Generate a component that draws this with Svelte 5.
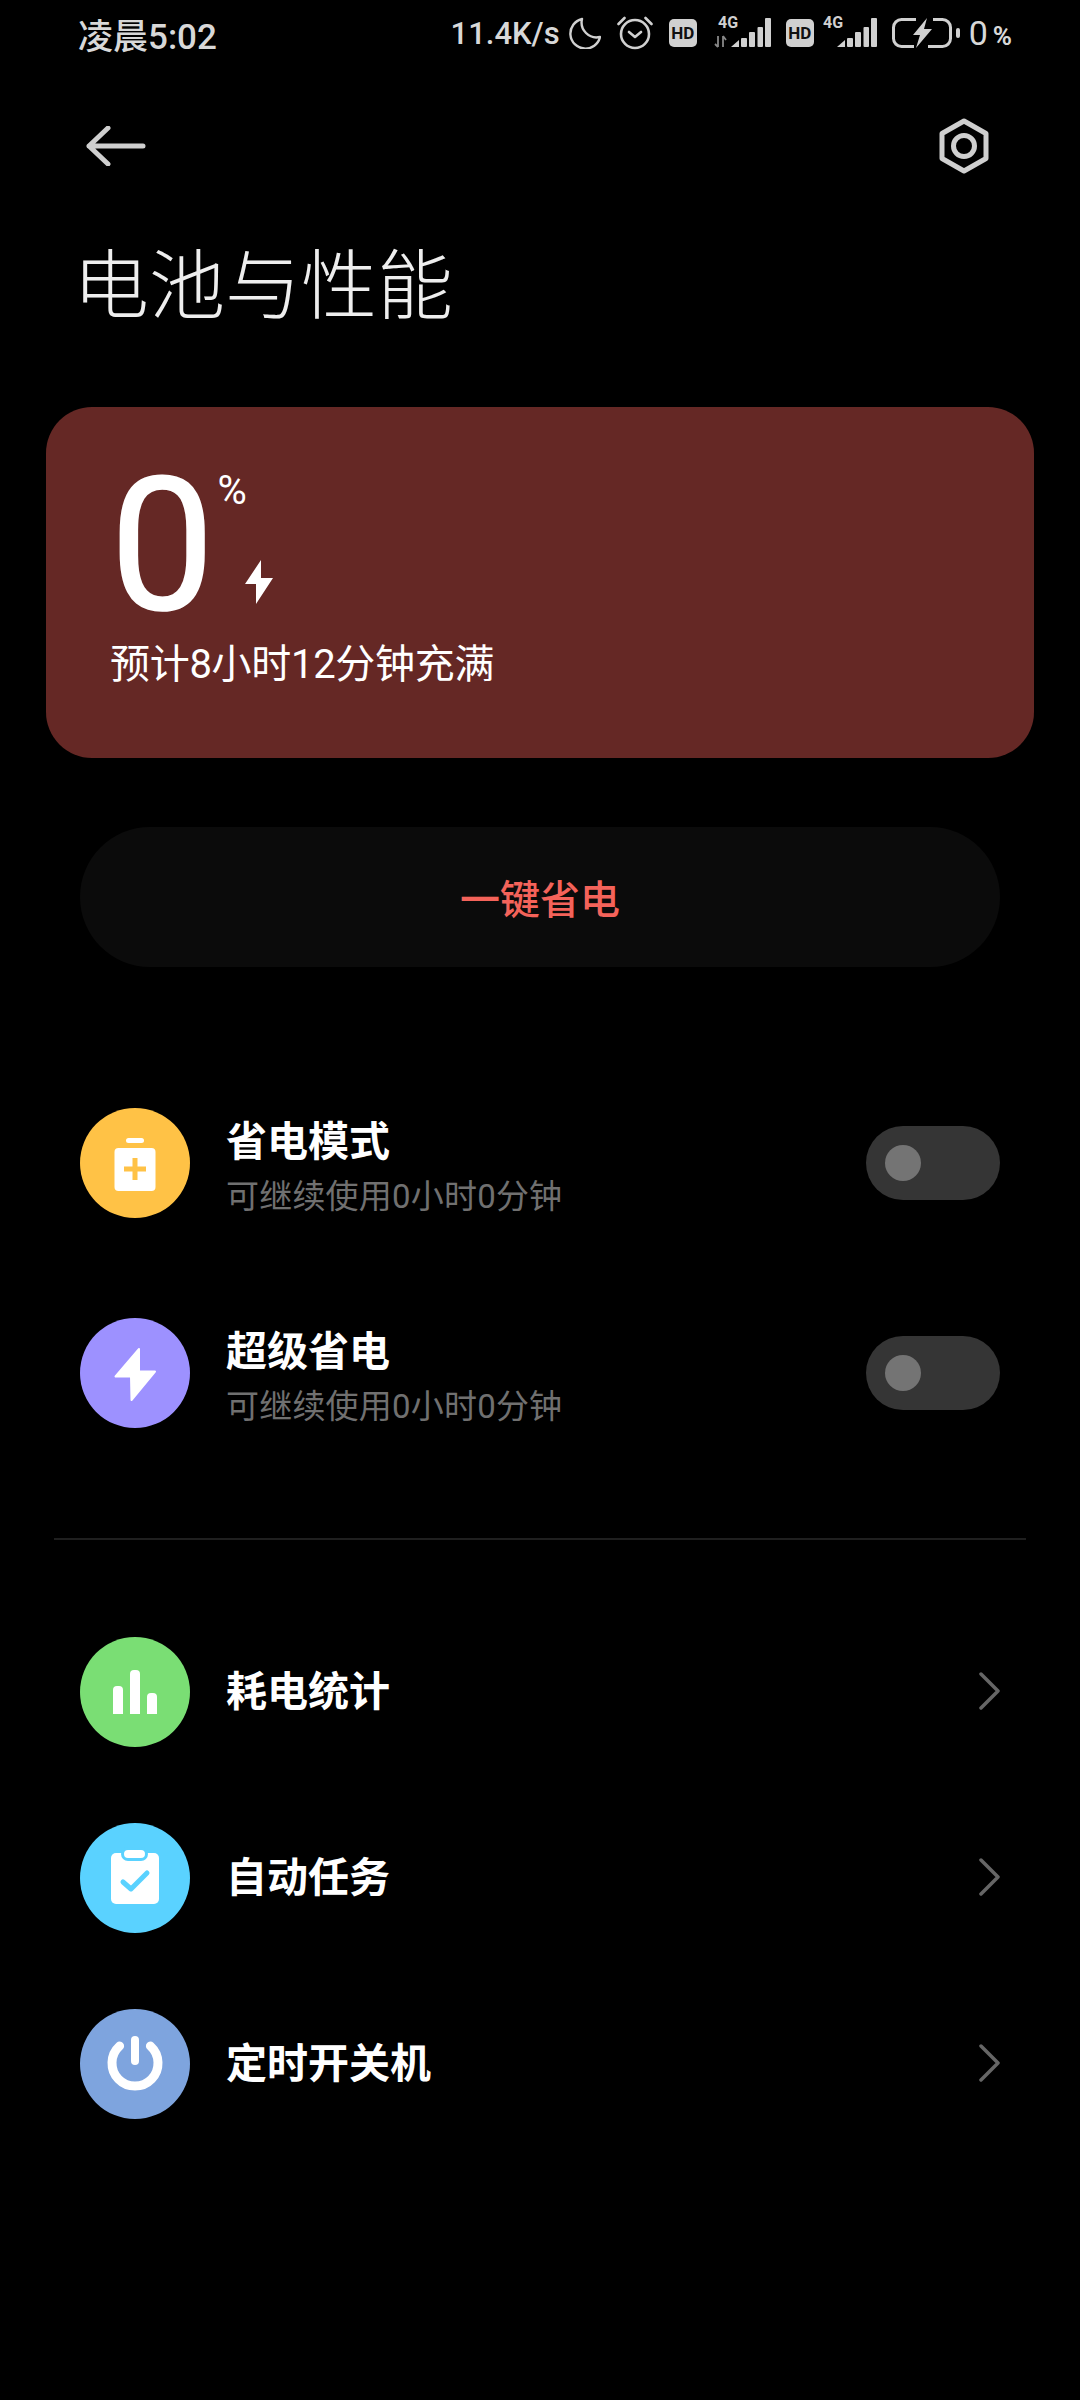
<script>
  const powerRows = [
    { title: '省电模式', sub: '可继续使用0小时0分钟', color: '#ffc246', icon: 'saver' },
    { title: '超级省电', sub: '可继续使用0小时0分钟', color: '#9d91ff', icon: 'bolt' }
  ];
  const linkRows = [
    { title: '耗电统计', color: '#7ade74', icon: 'stats' },
    { title: '自动任务', color: '#5ad2ff', icon: 'tasks' },
    { title: '定时开关机', color: '#7ea4de', icon: 'power' }
  ];
</script>

{#snippet signal(first)}
  <svg class="sig" class:first width={first ? 58 : 54} height="42" viewBox="0 -3 {first ? 58 : 54} 42">
    <text x={first ? 4 : 0} y="13">4G</text>
    {#if first}
      <path d="M4 21v11M1 29l3 3M9 32V21M9 21l3 4" class="arrows" />
    {/if}
    <g fill="#d0d0d0" transform={first ? '' : 'translate(-3 0)'}>
      <path d="M17 32l8-7v7z" />
      <rect x="27" y="23" width="6" height="9" rx="1" />
      <rect x="35" y="17" width="6" height="15" rx="1" />
      <rect x="43.5" y="12" width="5.5" height="20" rx="1" />
      <rect x="51" y="3" width="6" height="29" rx="1" />
    </g>
  </svg>
{/snippet}

{#snippet icon(name, color)}
  <svg class="disc" width="110" height="110" viewBox="0 0 110 110">
    <circle cx="55" cy="55" r="55" fill={color} />
    {#if name === 'saver'}
      <rect x="46" y="30" width="18" height="5" rx="2.5" fill="#fff" />
      <rect x="34.5" y="40" width="41" height="43" rx="4" fill="#fff" />
      <path d="M55 50v22M44 61h22" stroke={color} stroke-width="5" fill="none" />
    {:else if name === 'bolt'}
      <path d="M59 31L35.500 58.500H51L51.500 82L75 53.500H59Z" fill="#fff" stroke="#fff" stroke-width="2" stroke-linejoin="round" />
    {:else if name === 'stats'}
      <g fill="#fff">
        <path d="M33 77V53a4 4 0 0 1 4-4h2a4 4 0 0 1 4 4v24z" />
        <path d="M50 77V37a4 4 0 0 1 4-4h2a4 4 0 0 1 4 4v40z" />
        <path d="M67 77V60a4 4 0 0 1 4-4h2a4 4 0 0 1 4 4v17z" />
      </g>
    {:else if name === 'tasks'}
      <rect x="31" y="30" width="48" height="51" rx="5" fill="#fff" />
      <rect x="42.500" y="25.500" width="24" height="11" rx="5.500" fill="#fff" stroke={color} stroke-width="3" />
      <path d="M43 59l8 7 16-16" stroke={color} stroke-width="5" stroke-linecap="round" stroke-linejoin="round" fill="none" />
    {:else}
      <path d="M39.600 37A23 23 0 1 0 70.400 37" stroke="#fff" stroke-width="9" stroke-linecap="round" fill="none" />
      <path d="M55 31V52" stroke="#fff" stroke-width="8" stroke-linecap="round" />
    {/if}
  </svg>
{/snippet}

<div class="page">
  <div class="status">
    <span class="clock">凌晨5:02</span>
    <div class="status-right">
      <span class="speed">11.4K/s</span>
      <svg class="moon" width="32" height="32" viewBox="0 0 32 32">
        <path d="M13 2A15 15 0 1 0 31 20A15 15 0 0 1 13 2Z" fill="none" stroke="#d0d0d0" stroke-width="2.400" stroke-linejoin="round" />
      </svg>
      <svg class="alarm" width="36" height="34" viewBox="0 0 36 34">
        <circle cx="18" cy="18" r="14" fill="none" stroke="#d0d0d0" stroke-width="2.600" />
        <path d="M12 16l6 5 6-5M1.500 8L7.500 2M34.500 8L28.500 2" fill="none" stroke="#d0d0d0" stroke-width="2.600" stroke-linecap="round" stroke-linejoin="round" />
      </svg>
      <span class="hd">HD</span>
      {@render signal(true)}
      <span class="hd">HD</span>
      {@render signal(false)}
      <svg class="batt" width="68" height="30" viewBox="0 0 68 30">
        <path d="M24 1.500H9.500a8 8 0 0 0-8 8v11a8 8 0 0 0 8 8H22M41 1.500H50.500a8 8 0 0 1 8 8v11a8 8 0 0 1-8 8H36" fill="none" stroke="#d0d0d0" stroke-width="3" />
        <path d="M35 0L21 17H28L24 30L40 11H32Z" fill="#d0d0d0" />
        <rect x="64" y="10" width="4" height="10" rx="2" fill="#d0d0d0" />
      </svg>
      <span class="level">0<small>%</small></span>
    </div>
  </div>

  <div class="nav">
    <svg width="60" height="40" viewBox="0 0 60 40">
      <path d="M22 2L3 20L22 38M3 20H57" fill="none" stroke="#cfcfcf" stroke-width="5" stroke-linecap="round" stroke-linejoin="round" />
    </svg>
    <svg width="52" height="56" viewBox="0 0 52 56">
      <path d="M26 3L48 15.500V40.500L26 53L4 40.500V15.500Z" fill="none" stroke="#cfcfcf" stroke-width="5" stroke-linejoin="round" />
      <circle cx="26" cy="28" r="10.500" fill="none" stroke="#cfcfcf" stroke-width="5" />
    </svg>
  </div>

  <h1>电池与性能</h1>

  <section class="card">
    <div class="reading">
      <span class="num">0</span>
      <div class="marks">
        <span class="pct">%</span>
        <svg width="30" height="46" viewBox="0 0 30 46">
          <path d="M17 1L1 25H12L12 45L29 19H17Z" fill="#fff" />
        </svg>
      </div>
    </div>
    <p>预计8小时12分钟充满</p>
  </section>

  <button class="saver">一键省电</button>

  <div class="power-list">
    {#each powerRows as row}
      <div class="row">
        {@render icon(row.icon, row.color)}
        <div class="text">
          <span class="name">{row.title}</span>
          <span class="sub">{row.sub}</span>
        </div>
        <span class="toggle"><span class="knob"></span></span>
      </div>
    {/each}
  </div>

  <hr />

  <div class="link-list">
    {#each linkRows as row}
      <div class="row">
        {@render icon(row.icon, row.color)}
        <span class="name">{row.title}</span>
        <svg class="chev" width="24" height="40" viewBox="0 0 24 40">
          <path d="M5 3L22 20L5 37" fill="none" stroke="#666" stroke-width="3.500" stroke-linecap="round" stroke-linejoin="round" />
        </svg>
      </div>
    {/each}
  </div>
</div>

<style>
  :global(body) {
    margin: 0;
    background: #000;
  }

  .page {
    width: 1080px;
    height: 2400px;
    background: #000;
    color: #fff;
    font-family: Roboto, "Noto Sans CJK SC", sans-serif;
    overflow: hidden;
  }

  .status {
    height: 66px;
    padding: 0 68px 0 78px;
    display: flex;
    align-items: center;
    justify-content: space-between;
    color: #d8d8d8;
  }

  .clock {
    font-size: 35px;
    font-weight: 500;
  }

  .status-right {
    display: flex;
    align-items: center;
  }

  .speed {
    font-size: 31px;
    font-weight: 500;
  }

  .moon { margin-left: 9px; }
  .alarm { margin-left: 16px; }

  .hd {
    width: 28px;
    height: 28px;
    margin-left: 16px;
    border-radius: 5px;
    background: #d0d0d0;
    color: #111;
    font-size: 17px;
    font-weight: 700;
    line-height: 28px;
    text-align: center;
  }

  .sig { margin-left: 9px; }
  .sig.first {
    margin-left: 17px;
    margin-right: -2px;
  }

  .sig text {
    fill: #d0d0d0;
    font-size: 16px;
    font-weight: 700;
  }

  .arrows {
    fill: none;
    stroke: #888;
    stroke-width: 1.8;
  }

  .batt { margin-left: 15px; }

  .level {
    margin-left: 9px;
    font-size: 34px;
  }

  .level small {
    margin-left: 5px;
    font-size: 26px;
    font-weight: 700;
  }

  .nav {
    height: 76px;
    margin-top: 42px;
    padding: 0 90px 0 86px;
    display: flex;
    align-items: center;
    justify-content: space-between;
  }

  h1 {
    margin: 58px 0 0 73px;
    font-size: 76px;
    font-weight: 300;
    line-height: 90px;
    color: #eee;
  }

  .card {
    width: 988px;
    height: 351px;
    margin: 75px 46px 0;
    box-sizing: border-box;
    padding: 48px 64px 0;
    border-radius: 46px;
    background: #652825;
  }

  .reading {
    display: flex;
    height: 176px;
  }

  .num {
    font-size: 186px;
    line-height: 180px;
    font-weight: 400;
    -webkit-text-stroke: 1.5px #fff;
  }

  .marks {
    display: flex;
    flex-direction: column;
    padding: 12px 0 0 3px;
  }

  .pct {
    font-size: 40px;
    line-height: 48px;
  }

  .marks svg {
    margin: 44px 0 0 26px;
  }

  .card p {
    margin: 6px 0 0;
    font-size: 40px;
    line-height: 56px;
    letter-spacing: -0.3px;
  }

  .saver {
    display: block;
    width: 920px;
    height: 140px;
    margin: 69px 80px 0;
    border: 0;
    border-radius: 70px;
    background: #0b0b0b;
    color: #f4635a;
    font: 500 40px "Noto Sans CJK SC", sans-serif;
  }

  .power-list {
    margin-top: 141px;
    padding: 0 80px;
    display: flex;
    flex-direction: column;
    gap: 100px;
  }

  .link-list {
    margin-top: 97px;
    padding: 0 80px;
    display: flex;
    flex-direction: column;
    gap: 76px;
  }

  .row {
    display: flex;
    align-items: center;
    height: 110px;
  }

  .disc {
    flex: none;
    margin-right: 36px;
  }

  .text {
    display: flex;
    flex-direction: column;
    flex: 1;
    padding-top: 11px;
  }

  .name {
    flex: 1;
    font-size: 41px;
    font-weight: 700;
    line-height: 56px;
  }

  .text .name { flex: none; }

  .sub {
    font-size: 33px;
    line-height: 54px;
    letter-spacing: 0.2px;
    color: #707070;
  }

  .toggle {
    flex: none;
    width: 134px;
    height: 74px;
    border-radius: 37px;
    background: #353535;
    display: flex;
    align-items: center;
    padding-left: 19px;
    box-sizing: border-box;
  }

  .knob {
    width: 36px;
    height: 36px;
    border-radius: 50%;
    background: #747474;
  }

  .chev {
    margin-top: -2px;
  }

  hr {
    width: 972px;
    height: 2px;
    margin: 110px 54px 0;
    border: 0;
    background: #1f1f1f;
  }
</style>
